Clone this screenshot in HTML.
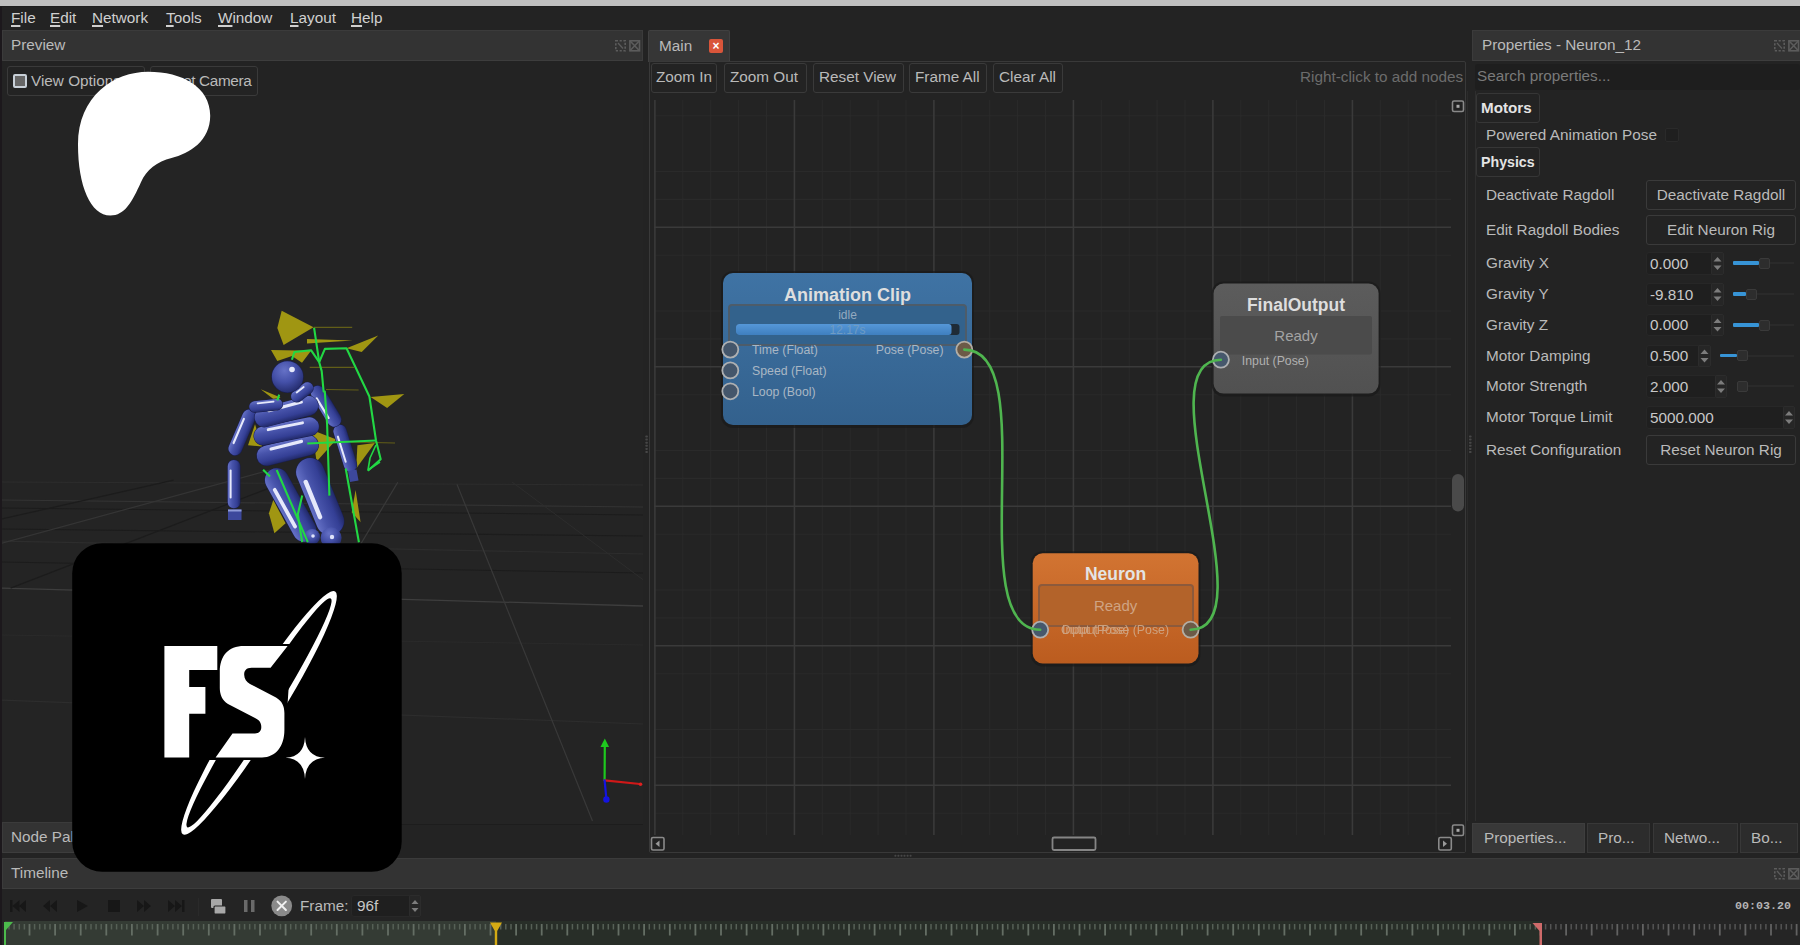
<!DOCTYPE html>
<html><head><meta charset="utf-8">
<style>
*{box-sizing:border-box;margin:0;padding:0}
html,body{width:1800px;height:945px;overflow:hidden;background:#232323;font-family:"Liberation Sans",sans-serif;color:#bababa}
.a{position:absolute}
.t{position:absolute;white-space:nowrap;font-size:15.3px;line-height:18px}
.hdr{position:absolute;background:#333333;border:1px solid #3b3b3b;border-bottom-color:#3d3d3d}
.btn{position:absolute;border:1px solid #3a3a3a;border-radius:3px;background:#232323}
.u{text-decoration:underline;text-underline-offset:2px;text-decoration-thickness:2px}
.ic{position:absolute;width:11px;height:11px;border:1px dashed #666}
</style></head><body>
<!-- top strip -->
<div class="a" style="left:0;top:0;width:1800px;height:6px;background:#bfbfbf"></div>
<div class="a" style="left:0;top:6px;width:1.5px;height:939px;background:#1c181c"></div><div class="a" style="left:0;top:6px;width:1800px;height:1px;background:#1e1e1e"></div>

<!-- menu bar -->
<div class="t" style="left:11px;top:8.5px;color:#d0d0d0"><span class="u">F</span>ile</div>
<div class="t" style="left:50px;top:8.5px;color:#d0d0d0"><span class="u">E</span>dit</div>
<div class="t" style="left:92px;top:8.5px;color:#d0d0d0"><span class="u">N</span>etwork</div>
<div class="t" style="left:166px;top:8.5px;color:#d0d0d0"><span class="u">T</span>ools</div>
<div class="t" style="left:218px;top:8.5px;color:#d0d0d0"><span class="u">W</span>indow</div>
<div class="t" style="left:290px;top:8.5px;color:#d0d0d0"><span class="u">L</span>ayout</div>
<div class="t" style="left:351px;top:8.5px;color:#d0d0d0"><span class="u">H</span>elp</div>

<!-- ===== LEFT PREVIEW DOCK ===== -->
<div class="hdr" style="left:2px;top:30px;width:641px;height:31px"></div>
<div class="t" style="left:11px;top:36px">Preview</div>
<svg class="a" style="left:614px;top:38.5px" width="30" height="14" viewBox="614 38.5 30 14"><g stroke="#5c5c5c" stroke-width="1.6" fill="none"><rect x="615.8" y="40.3" width="9.4" height="10" stroke-dasharray="2.2 1.6"/><path d="M618 42.5l5 5.5" stroke-width="1.3"/><rect x="629.9" y="40.3" width="9.6" height="10"/><path d="M629.9 40.3l9.6 10M639.5 40.3l-9.6 10"/></g></svg>

<div class="btn" style="left:7px;top:66px;width:138px;height:30px"></div>
<div class="a" style="left:13px;top:74px;width:14px;height:14px;border:2px solid #c8d0d8;background:#666;border-radius:2px"></div>
<div class="t" style="left:31px;top:72px">View Options</div>
<div class="btn" style="left:150px;top:66px;width:108px;height:30px"></div>
<div class="t" style="left:157px;top:72px;letter-spacing:-0.35px">Reset Camera</div>

<!--VIEWPORT--><svg class="a" style="left:2px;top:100px" width="641" height="724" viewBox="2 100 641 724"><defs><linearGradient id="capG" x1="0" y1="0" x2="0" y2="1"><stop offset="0" stop-color="#6571c6"/><stop offset="0.35" stop-color="#4854ab"/><stop offset="0.75" stop-color="#343f95"/><stop offset="1" stop-color="#222a6a"/></linearGradient><radialGradient id="headG" cx="0.4" cy="0.3" r="0.75"><stop offset="0" stop-color="#6571c6"/><stop offset="0.5" stop-color="#4450a8"/><stop offset="1" stop-color="#222a6a"/></radialGradient></defs><rect x="2" y="100" width="641" height="724" fill="#242424"/><line x1="0" y1="588" x2="643" y2="606" stroke="#3e3e3e" stroke-width="1.3"/><line x1="0" y1="541" x2="643" y2="554" stroke="#2d2d2d" stroke-width="1.2"/><line x1="0" y1="500" x2="643" y2="507" stroke="#333" stroke-width="1.2"/><line x1="0" y1="482" x2="643" y2="485" stroke="#2d2d2d" stroke-width="1"/><line x1="0" y1="529" x2="643" y2="536" stroke="#1c1c1c" stroke-width="1.2"/><line x1="0" y1="508" x2="643" y2="515" stroke="#1c1c1c" stroke-width="1"/><line x1="0" y1="562" x2="643" y2="573" stroke="#1c1c1c" stroke-width="1"/><line x1="0" y1="700" x2="643" y2="724" stroke="#2d2d2d" stroke-width="1.2"/><line x1="0" y1="635" x2="643" y2="645" stroke="#2a2a2a" stroke-width="1"/><line x1="0" y1="543.7" x2="270" y2="470" stroke="#353535" stroke-width="1.2"/><line x1="0" y1="519.4" x2="173.6" y2="480.2" stroke="#1c1c1c" stroke-width="1.3"/><line x1="10.6" y1="588.2" x2="290" y2="480" stroke="#1c1c1c" stroke-width="1.3"/><line x1="397.8" y1="482.3" x2="300" y2="645" stroke="#393939" stroke-width="1.2"/><line x1="457" y1="484.4" x2="592.5" y2="821" stroke="#393939" stroke-width="1.2"/><line x1="512" y1="482" x2="643" y2="579.7" stroke="#2d2d2d" stroke-width="1"/><path d="M281.7 310.8 L313.5 327.3 L283.6 345.1 L277.3 327.9Z" fill="#a09612" opacity="1"/><path d="M307.0 339.0 L352.8 340.6 L307.0 343.5Z" fill="#a09612" opacity="1"/><path d="M346.5 348.2 L378.2 335.5 L361.7 352.0Z" fill="#a09612" opacity="1"/><path d="M271.0 350.0 L311.0 350.8 L302.0 362.8 L292.0 356.0 L277.3 361.0Z" fill="#a09612" opacity="1"/><path d="M370.6 397.0 L404.3 394.0 L387.1 408.0Z" fill="#a09612" opacity="1"/><path d="M260.7 389.3 L280.5 397.5 L275.9 401.0Z" fill="#a09612" opacity="1"/><path d="M248.0 445.2 L255.0 424.2 L262.0 446.4Z" fill="#a09612" opacity="1"/><path d="M312.0 430.0 L336.4 439.4 L316.6 461.5Z" fill="#a09612" opacity="1"/><path d="M357.4 445.2 L374.9 442.9 L356.2 468.5Z" fill="#a09612" opacity="1"/><path d="M273.3 500.0 L285.6 523.3 L274.4 533.3 L268.9 513.3Z" fill="#a09612" opacity="1"/><path d="M355.6 490.0 L360.6 522.2 L351.7 512.2Z" fill="#a09612" opacity="1"/><line x1="313.5" y1="327.3" x2="352.2" y2="327.3" stroke="#625e18" stroke-width="1.2"/><line x1="309.7" y1="367.3" x2="354.1" y2="367.3" stroke="#625e18" stroke-width="1.2"/><line x1="326" y1="389.5" x2="358.6" y2="390" stroke="#625e18" stroke-width="1.2"/><line x1="350" y1="442" x2="395" y2="443" stroke="#625e18" stroke-width="1.2"/><g transform="translate(233.9 484.1) rotate(-90.0)"><rect x="-24.7" y="-6.6" width="49.4" height="13.2" rx="6.6" fill="#1a1f50"/><rect x="-24.2" y="-6.1" width="48.4" height="12.2" rx="6.1" fill="url(#capG)"/><rect x="-14.5" y="-4.3" width="29.0" height="2.0" rx="1.0" fill="#e6e9fb"/></g><g transform="translate(242.1 432.4) rotate(-66.8)"><rect x="-24.8" y="-7.1" width="49.7" height="14.2" rx="7.1" fill="#1a1f50"/><rect x="-24.3" y="-6.6" width="48.7" height="13.2" rx="6.6" fill="url(#capG)"/><rect x="-14.2" y="-4.7" width="28.4" height="2.1" rx="1.1" fill="#e6e9fb"/></g><g transform="translate(290.5 505.0) rotate(-119.0)"><rect x="-40.8" y="-12.2" width="81.6" height="24.4" rx="12.2" fill="#1a1f50"/><rect x="-40.3" y="-11.7" width="80.6" height="23.4" rx="11.7" fill="url(#capG)"/><rect x="-22.9" y="-8.3" width="45.7" height="3.7" rx="1.9" fill="#e6e9fb"/></g><g transform="translate(320.0 496.6) rotate(-112.2)"><rect x="-40.9" y="-14.4" width="81.8" height="28.8" rx="14.4" fill="#1a1f50"/><rect x="-40.4" y="-13.9" width="80.8" height="27.8" rx="13.9" fill="url(#capG)"/><rect x="-21.2" y="-9.9" width="42.4" height="4.4" rx="2.2" fill="#e6e9fb"/></g><g transform="translate(345.1 448.1) rotate(-107.3)"><rect x="-24.6" y="-6.9" width="49.2" height="13.8" rx="6.9" fill="#1a1f50"/><rect x="-24.1" y="-6.4" width="48.2" height="12.8" rx="6.4" fill="url(#capG)"/><rect x="-14.2" y="-4.5" width="28.3" height="2.0" rx="1.0" fill="#e6e9fb"/></g><g transform="translate(326.0 406.2) rotate(-121.3)"><rect x="-23.2" y="-7.5" width="46.4" height="15.0" rx="7.5" fill="#1a1f50"/><rect x="-22.7" y="-7.0" width="45.4" height="14.0" rx="7.0" fill="url(#capG)"/><rect x="-12.5" y="-5.0" width="25.1" height="2.2" rx="1.1" fill="#e6e9fb"/></g><g transform="translate(287.6 450.4) rotate(-14.1)"><rect x="-32.0" y="-10.4" width="64.0" height="20.8" rx="10.4" fill="#1a1f50"/><rect x="-31.5" y="-9.9" width="63.0" height="19.8" rx="9.9" fill="url(#capG)"/><rect x="-17.3" y="-7.0" width="34.6" height="3.2" rx="1.6" fill="#e6e9fb"/></g><g transform="translate(286.4 431.2) rotate(-11.3)"><rect x="-33.4" y="-9.7" width="66.8" height="19.4" rx="9.7" fill="#1a1f50"/><rect x="-32.9" y="-9.2" width="65.8" height="18.4" rx="9.2" fill="url(#capG)"/><rect x="-19.0" y="-6.5" width="37.9" height="2.9" rx="1.5" fill="#e6e9fb"/></g><g transform="translate(286.4 411.5) rotate(-14.8)"><rect x="-33.0" y="-10.1" width="66.0" height="20.2" rx="10.1" fill="#1a1f50"/><rect x="-32.5" y="-9.6" width="65.0" height="19.2" rx="9.6" fill="url(#capG)"/><rect x="-18.3" y="-6.8" width="36.7" height="3.1" rx="1.5" fill="#e6e9fb"/></g><g transform="translate(265.9 405.6) rotate(-5.9)"><rect x="-17.2" y="-6.1" width="34.4" height="12.2" rx="6.1" fill="#1a1f50"/><rect x="-16.7" y="-5.6" width="33.4" height="11.2" rx="5.6" fill="url(#capG)"/><rect x="-8.9" y="-4.0" width="17.8" height="1.8" rx="0.9" fill="#e6e9fb"/></g><g transform="translate(302.1 392.2) rotate(-37.6)"><rect x="-12.9" y="-6.3" width="25.9" height="12.6" rx="6.3" fill="#1a1f50"/><rect x="-12.4" y="-5.8" width="24.9" height="11.6" rx="5.8" fill="url(#capG)"/><rect x="-5.3" y="-4.1" width="10.6" height="1.9" rx="0.9" fill="#e6e9fb"/></g><circle cx="287.5" cy="376.8" r="16.2" fill="#1a1f50"/><circle cx="287.5" cy="376.8" r="15.6" fill="url(#headG)"/><circle cx="292" cy="369.5" r="2.8" fill="#e6e9fb"/><circle cx="312.2" cy="536.7" r="7.8" fill="url(#headG)"/><circle cx="313" cy="536" r="1.8" fill="#dfe3fa"/><circle cx="331.1" cy="537.8" r="10.5" fill="url(#headG)"/><circle cx="332" cy="537" r="2.2" fill="#dfe3fa"/><path d="M228 509.5h13.5v10.5h-13.5z" fill="#3d489c"/><path d="M228 509.5h13.5v2h-13.5z" fill="#8f9ad8"/><path d="M348 471l8.5 -1.5 2 11 -8.5 1.5z" fill="#3d489c"/><path d="M314.1 327.9 L319.2 362.2 L321.7 371.1 L323.6 391.4 L324.8 391.6 L327.1 424.2 L329.4 495.6" stroke="#22d844" stroke-width="2.1" fill="none" stroke-linejoin="round"/><path d="M291.9 359.7 L294.4 352.0 L311.0 350.2 L319.2 362.2" stroke="#22d844" stroke-width="2.1" fill="none" stroke-linejoin="round"/><path d="M319.2 362.2 L324.9 348.9 L346.5 348.2 L369.4 396.5 L376.0 440.5 L380.7 459.2 L367.9 470.8" stroke="#22d844" stroke-width="2.1" fill="none" stroke-linejoin="round"/><path d="M307.3 443.5 L376.0 440.5" stroke="#22d844" stroke-width="2.1" fill="none" stroke-linejoin="round"/><path d="M279.2 394.6 L277.3 400.3" stroke="#22d844" stroke-width="2.1" fill="none" stroke-linejoin="round"/><path d="M345.7 468.5 L358.9 542.2" stroke="#22d844" stroke-width="2.1" fill="none" stroke-linejoin="round"/><path d="M276.7 470.0 L307.8 542.2" stroke="#22d844" stroke-width="2.1" fill="none" stroke-linejoin="round"/><path d="M302.2 495.6 L297.8 514.4 L302.2 542.2" stroke="#22d844" stroke-width="2.1" fill="none" stroke-linejoin="round"/><path d="M263.1 469.7 L270.0 476.6" stroke="#22d844" stroke-width="2.1" fill="none" stroke-linejoin="round"/><path d="M376.0 445.0 L370.0 458.0 L368.0 470.0 L380.0 462.0" stroke="#22d844" stroke-width="1.6" fill="none" stroke-linejoin="round"/><g stroke-width="2.2" stroke-linecap="round"><line x1="604.6" y1="780.3" x2="604.8" y2="745" stroke="#1ec81e"/><line x1="604.6" y1="780.3" x2="640" y2="784" stroke="#d01818"/><line x1="604.6" y1="780.3" x2="606.3" y2="798" stroke="#1414e0"/></g><path d="M600.5 747l4.3-8.5 4.3 8.5z" fill="#1ec81e"/><circle cx="606.4" cy="799.5" r="3.2" fill="#1414e0"/><circle cx="640.5" cy="784.2" r="1.8" fill="#e02020"/></svg>
<!--/VIEWPORT--><div class="a" style="left:2px;top:823.5px;width:641px;height:1px;background:#1d1d1d"></div>

<div class="hdr" style="left:2px;top:822px;width:200px;height:31px"></div>
<div class="t" style="left:11px;top:828px">Node Palette</div>

<!-- ===== CENTER ===== -->
<div class="a" style="left:648px;top:30px;width:82px;height:32px;background:#363636;border:1px solid #404040;border-bottom:none;border-radius:2px 2px 0 0"></div>
<div class="t" style="left:659px;top:37px">Main</div>
<div class="a" style="left:709px;top:39px;width:14px;height:14px;background:#d9553a;border-radius:2px;color:#fff;font-size:12px;line-height:14px;text-align:center;font-weight:bold">&#215;</div>

<div class="a" style="left:649px;top:61px;width:817px;height:792px;border:1px solid #393939;border-radius:2px"></div>
<div class="btn" style="left:651px;top:63px;width:66px;height:30px"></div>
<div class="t" style="left:656px;top:68px">Zoom In</div>
<div class="btn" style="left:724px;top:63px;width:83px;height:30px"></div>
<div class="t" style="left:730px;top:68px">Zoom Out</div>
<div class="btn" style="left:813px;top:63px;width:91px;height:30px"></div>
<div class="t" style="left:819px;top:68px">Reset View</div>
<div class="btn" style="left:909px;top:63px;width:78px;height:30px"></div>
<div class="t" style="left:915px;top:68px">Frame All</div>
<div class="btn" style="left:993px;top:63px;width:70px;height:30px"></div>
<div class="t" style="left:999px;top:68px">Clear All</div>
<div class="t" style="left:1300px;top:68px;color:#6c6c6c">Right-click to add nodes</div>

<svg class="a" style="left:650px;top:96px" width="815" height="756" viewBox="650 96 815 756">
<rect x="650" y="96" width="815" height="756" fill="#232323"/>
<path d="M682.8 100V835M710.7 100V835M738.6 100V835M766.5 100V835M822.3 100V835M850.2 100V835M878.1 100V835M906.0 100V835M961.8 100V835M989.7 100V835M1017.6 100V835M1045.5 100V835M1101.3 100V835M1129.2 100V835M1157.1 100V835M1185.0 100V835M1240.8 100V835M1268.7 100V835M1296.6 100V835M1324.5 100V835M1380.3 100V835M1408.2 100V835M1436.1 100V835M654 115.7H1451M654 171.5H1451M654 199.4H1451M654 255.2H1451M654 311.0H1451M654 338.9H1451M654 394.7H1451M654 450.5H1451M654 478.4H1451M654 534.2H1451M654 590.0H1451M654 617.9H1451M654 673.7H1451M654 729.5H1451M654 757.4H1451M654 813.2H1451" stroke="#2a2a2a" stroke-width="1.1" fill="none"/>
<path d="M654.9 100V835M794.4 100V835M933.9 100V835M1073.4 100V835M1212.9 100V835M1352.4 100V835M654 227.3H1451M654 366.8H1451M654 506.3H1451M654 645.8H1451M654 785.3H1451" stroke="#3a3a3a" stroke-width="1.6" fill="none"/>

<defs>
<linearGradient id="gBlue" x1="0" y1="0" x2="0" y2="1"><stop offset="0" stop-color="#3f73a4"/><stop offset="1" stop-color="#33618d"/></linearGradient>
<linearGradient id="gGrey" x1="0" y1="0" x2="0" y2="1"><stop offset="0" stop-color="#5c5c5c"/><stop offset="1" stop-color="#515151"/></linearGradient>
<linearGradient id="gOrange" x1="0" y1="0" x2="0" y2="1"><stop offset="0" stop-color="#d27432"/><stop offset="1" stop-color="#bb5c1f"/></linearGradient>
<linearGradient id="gBar" x1="0" y1="0" x2="0" y2="1"><stop offset="0" stop-color="#5597d8"/><stop offset="1" stop-color="#3f7fbf"/></linearGradient>
</defs>
<!-- Animation Clip -->
<rect x="721" y="271" width="253" height="157" rx="12" fill="#1a1a1a" opacity="0.7"/><rect x="723" y="273" width="249" height="152" rx="10" fill="url(#gBlue)"/>
<rect x="729" y="305" width="237" height="40" rx="3" fill="#33628c" stroke="#4d5c6a" stroke-width="2"/>
<text x="847.5" y="300.5" text-anchor="middle" font-family="Liberation Sans" font-weight="bold" font-size="18" fill="#dedede">Animation Clip</text>
<text x="847.5" y="319" text-anchor="middle" font-family="Liberation Sans" font-size="12" fill="#94aac0">idle</text>
<rect x="736" y="324" width="223.5" height="11" rx="3" fill="#1f2b36"/>
<rect x="736" y="324" width="215.5" height="11" rx="3" fill="url(#gBar)"/>
<text x="847.5" y="334" text-anchor="middle" font-family="Liberation Sans" font-size="12" fill="#6f9cc4">12.17s</text>
<g font-family="Liberation Sans" font-size="12.3" fill="#a9b7c4">
<text x="752" y="353.8">Time (Float)</text>
<text x="752" y="374.6">Speed (Float)</text>
<text x="752" y="395.5">Loop (Bool)</text>
<text x="943.5" y="353.8" text-anchor="end">Pose (Pose)</text>
</g>
<g stroke="#aeb0b2" stroke-width="1.8" fill="#44566b">
<circle cx="730.3" cy="349.6" r="8"/><circle cx="730.3" cy="370.4" r="8"/><circle cx="730.3" cy="391.3" r="8"/>
</g>
<circle cx="964.3" cy="349.6" r="8" fill="#6c5a47" stroke="#b4aea4" stroke-width="1.8"/>

<!-- FinalOutput -->
<rect x="1211.6" y="281.6" width="169" height="115" rx="12" fill="#1a1a1a" opacity="0.7"/><rect x="1213.6" y="283.6" width="165" height="110" rx="10" fill="url(#gGrey)"/>
<rect x="1220" y="316" width="152" height="38.4" rx="2" fill="#4b4b4b"/>
<text x="1296" y="310.7" text-anchor="middle" font-family="Liberation Sans" font-weight="bold" font-size="17.5" fill="#dedede">FinalOutput</text>
<text x="1296" y="340.5" text-anchor="middle" font-family="Liberation Sans" font-size="15" fill="#a3a3a3">Ready</text>
<text x="1241.8" y="364.5" font-family="Liberation Sans" font-size="12.3" fill="#b0b0b0">Input (Pose)</text>
<circle cx="1220.9" cy="359.7" r="8" fill="#46586c" stroke="#aeb0b2" stroke-width="1.8"/>

<!-- Neuron -->
<rect x="1030.7" y="551.2" width="169.8" height="115.2" rx="12" fill="#1a1a1a" opacity="0.7"/><rect x="1032.7" y="553.2" width="165.8" height="110.2" rx="10" fill="url(#gOrange)"/>
<rect x="1039" y="585" width="154" height="41" rx="3" fill="#b3632a" stroke="#8c5a3c" stroke-width="2"/>
<text x="1115.6" y="580.4" text-anchor="middle" font-family="Liberation Sans" font-weight="bold" font-size="17.5" fill="#e4e4e4">Neuron</text>
<text x="1115.6" y="611" text-anchor="middle" font-family="Liberation Sans" font-size="15" fill="#cfa483">Ready</text>
<g font-family="Liberation Sans" font-size="12.3" fill="#cfa98a" opacity="0.9">
<text x="1062" y="634">Input (Pose)</text>
<text x="1169" y="634" text-anchor="end">Output Pose (Pose)</text>
</g>
<circle cx="1040.2" cy="629.7" r="8" fill="#46586c" stroke="#aeb0b2" stroke-width="1.8"/>
<circle cx="1190.6" cy="629.7" r="8" fill="#6c5a47" stroke="#b4aea4" stroke-width="1.8"/>

<!-- connections -->
<g fill="none" stroke="#4fb54f" stroke-width="2.6" stroke-linecap="round">
<path d="M964.3 349.6C1044 349.6 960 629.7 1040.2 629.7"/>
<path d="M1190.6 629.7C1270 629.7 1141 359.7 1220.9 359.7"/>
</g>

<!-- scrollbars -->
<rect x="1452" y="474" width="12" height="37.5" rx="6" fill="#4a4a4a"/>
<rect x="1452.5" y="101" width="11" height="10.5" rx="1.5" fill="#222" stroke="#8a8a8a" stroke-width="1.6"/>
<rect x="1456.5" y="104.8" width="3" height="3" fill="#aaa"/>
<rect x="1452.5" y="825" width="11" height="10.5" rx="1.5" fill="#222" stroke="#8a8a8a" stroke-width="1.6"/>
<rect x="1456.5" y="828.8" width="3" height="3" fill="#aaa"/>
<rect x="1438.8" y="837.5" width="12.5" height="12.5" rx="1.5" fill="#222" stroke="#8a8a8a" stroke-width="1.6"/>
<path d="M1443 840.5l4 3.3-4 3.3z" fill="#999"/>
<rect x="651.5" y="837.5" width="12.5" height="12.5" rx="1.5" fill="#222" stroke="#8a8a8a" stroke-width="1.6"/>
<path d="M659.5 840.5l-4 3.3 4 3.3z" fill="#999"/>
<rect x="1052.5" y="837.5" width="43" height="12.5" rx="1.5" fill="#232323" stroke="#858585" stroke-width="1.8"/>
</svg>

<!-- ===== RIGHT DOCK ===== -->
<div class="hdr" style="left:1472px;top:30px;width:330px;height:31px"></div>
<div class="t" style="left:1482px;top:36px">Properties - Neuron_12</div>
<svg class="a" style="left:1773px;top:38.5px" width="30" height="14" viewBox="1773 38.5 30 14"><g stroke="#5c5c5c" stroke-width="1.6" fill="none"><rect x="1774.8" y="40.3" width="9.4" height="10" stroke-dasharray="2.2 1.6"/><path d="M1777 42.5l5 5.5" stroke-width="1.3"/><rect x="1788.8999999999999" y="40.3" width="9.6" height="10"/><path d="M1788.8999999999999 40.3l9.6 10M1798.5 40.3l-9.6 10"/></g></svg>

<div class="a" style="left:1475px;top:64px;width:325px;height:26px;background:#1e1e1e;border-radius:3px"></div>
<div class="t" style="left:1477px;top:67px;color:#7a7a7a">Search properties...</div>


<!-- props content -->
<div class="a" style="left:1467px;top:91px;width:1px;height:730px;background:#2b2b2b"></div>
<div class="a" style="left:1475px;top:91px;width:1px;height:730px;background:#2e2e2e"></div>
<div class="btn" style="left:1476px;top:93px;width:64px;height:30px;border-color:#363636"></div>
<div class="t" style="left:1481px;top:99px;font-weight:bold;color:#e4e4e4;font-size:15.2px">Motors</div>
<div class="t" style="left:1486px;top:126px">Powered Animation Pose</div>
<div class="a" style="left:1665px;top:128px;width:14px;height:14px;background:#1f1f1f;border:1px solid #2a2a2a;border-radius:2px"></div>
<div class="btn" style="left:1476px;top:147px;width:64px;height:30px;border-color:#363636"></div>
<div class="t" style="left:1481px;top:153px;font-weight:bold;color:#e4e4e4;font-size:14.2px">Physics</div>

<div class="t" style="left:1486px;top:186px">Deactivate Ragdoll</div>
<div class="btn" style="left:1646px;top:180px;width:150px;height:30px"></div>
<div class="t" style="left:1646px;top:186px;width:150px;text-align:center">Deactivate Ragdoll</div>

<div class="t" style="left:1486px;top:221px">Edit Ragdoll Bodies</div>
<div class="btn" style="left:1646px;top:215px;width:150px;height:30px"></div>
<div class="t" style="left:1646px;top:221px;width:150px;text-align:center">Edit Neuron Rig</div>

<div class="t" style="left:1486px;top:254px">Gravity X</div>
<div class="t" style="left:1486px;top:285px">Gravity Y</div>
<div class="t" style="left:1486px;top:316px">Gravity Z</div>
<div class="t" style="left:1486px;top:347px">Motor Damping</div>
<div class="t" style="left:1486px;top:377px">Motor Strength</div>
<div class="t" style="left:1486px;top:408px">Motor Torque Limit</div>
<div class="t" style="left:1486px;top:441px">Reset Configuration</div>
<div class="btn" style="left:1646px;top:435px;width:150px;height:30px"></div>
<div class="t" style="left:1646px;top:441px;width:150px;text-align:center">Reset Neuron Rig</div>
<div class="a" style="left:1646px;top:252px;width:78px;height:23px;background:#1f1f1f;border:1px solid #272727;border-radius:3px"></div><div class="a" style="left:1711px;top:252px;width:13px;height:23px;background:#262626;border:1px solid #2c2c2c;border-radius:2px"></div><svg class="a" style="left:1711px;top:252px" width="13" height="23"><path d="M2.5 9.5l4 -4.5 4 4.5z M2.5 13.5l4 4.5 4 -4.5z" fill="#7c7c7c"/></svg><div class="t" style="left:1650px;top:254.5px;color:#c8c8c8">0.000</div><div class="a" style="left:1733px;top:262px;width:61px;height:2px;background:#2a2a2a"></div><div class="a" style="left:1733px;top:261px;width:26px;height:3.5px;background:#3794d6;border-radius:1px"></div><div class="a" style="left:1759px;top:257.5px;width:11px;height:11px;background:#2d2d2d;border:1px solid #3a3a3a;border-radius:2px"></div><div class="a" style="left:1646px;top:283px;width:78px;height:23px;background:#1f1f1f;border:1px solid #272727;border-radius:3px"></div><div class="a" style="left:1711px;top:283px;width:13px;height:23px;background:#262626;border:1px solid #2c2c2c;border-radius:2px"></div><svg class="a" style="left:1711px;top:283px" width="13" height="23"><path d="M2.5 9.5l4 -4.5 4 4.5z M2.5 13.5l4 4.5 4 -4.5z" fill="#7c7c7c"/></svg><div class="t" style="left:1650px;top:285.5px;color:#c8c8c8">-9.810</div><div class="a" style="left:1733px;top:293px;width:61px;height:2px;background:#2a2a2a"></div><div class="a" style="left:1733px;top:292px;width:13px;height:3.5px;background:#3794d6;border-radius:1px"></div><div class="a" style="left:1746px;top:288.5px;width:11px;height:11px;background:#2d2d2d;border:1px solid #3a3a3a;border-radius:2px"></div><div class="a" style="left:1646px;top:314px;width:78px;height:22px;background:#1f1f1f;border:1px solid #272727;border-radius:3px"></div><div class="a" style="left:1711px;top:314px;width:13px;height:22px;background:#262626;border:1px solid #2c2c2c;border-radius:2px"></div><svg class="a" style="left:1711px;top:314px" width="13" height="22"><path d="M2.5 9.0l4 -4.5 4 4.5z M2.5 13.0l4 4.5 4 -4.5z" fill="#7c7c7c"/></svg><div class="t" style="left:1650px;top:316.0px;color:#c8c8c8">0.000</div><div class="a" style="left:1733px;top:324px;width:61px;height:2px;background:#2a2a2a"></div><div class="a" style="left:1733px;top:323px;width:26px;height:3.5px;background:#3794d6;border-radius:1px"></div><div class="a" style="left:1759px;top:319.5px;width:11px;height:11px;background:#2d2d2d;border:1px solid #3a3a3a;border-radius:2px"></div><div class="a" style="left:1646px;top:345px;width:65px;height:22px;background:#1f1f1f;border:1px solid #272727;border-radius:3px"></div><div class="a" style="left:1698px;top:345px;width:13px;height:22px;background:#262626;border:1px solid #2c2c2c;border-radius:2px"></div><svg class="a" style="left:1698px;top:345px" width="13" height="22"><path d="M2.5 9.0l4 -4.5 4 4.5z M2.5 13.0l4 4.5 4 -4.5z" fill="#7c7c7c"/></svg><div class="t" style="left:1650px;top:347.0px;color:#c8c8c8">0.500</div><div class="a" style="left:1720px;top:354.5px;width:74px;height:2px;background:#2a2a2a"></div><div class="a" style="left:1720px;top:353.5px;width:17px;height:3.5px;background:#3794d6;border-radius:1px"></div><div class="a" style="left:1737px;top:350.0px;width:11px;height:11px;background:#2d2d2d;border:1px solid #3a3a3a;border-radius:2px"></div><div class="a" style="left:1646px;top:375px;width:81px;height:23px;background:#1f1f1f;border:1px solid #272727;border-radius:3px"></div><div class="a" style="left:1715px;top:375px;width:12px;height:23px;background:#262626;border:1px solid #2c2c2c;border-radius:2px"></div><svg class="a" style="left:1715px;top:375px" width="12" height="23"><path d="M2.0 9.5l4 -4.5 4 4.5z M2.0 13.5l4 4.5 4 -4.5z" fill="#7c7c7c"/></svg><div class="t" style="left:1650px;top:377.5px;color:#c8c8c8">2.000</div><div class="a" style="left:1737px;top:385px;width:57px;height:2px;background:#2a2a2a"></div><div class="a" style="left:1737px;top:380.5px;width:11px;height:11px;background:#2d2d2d;border:1px solid #3a3a3a;border-radius:2px"></div><div class="a" style="left:1646px;top:406px;width:149px;height:23px;background:#1f1f1f;border:1px solid #272727;border-radius:3px"></div><div class="a" style="left:1783px;top:406px;width:12px;height:23px;background:#262626;border:1px solid #2c2c2c;border-radius:2px"></div><svg class="a" style="left:1783px;top:406px" width="12" height="23"><path d="M2.0 9.5l4 -4.5 4 4.5z M2.0 13.5l4 4.5 4 -4.5z" fill="#7c7c7c"/></svg><div class="t" style="left:1650px;top:408.5px;color:#c8c8c8">5000.000</div>

<!-- bottom tabs -->
<div class="a" style="left:1472px;top:823px;width:113px;height:30px;background:#383838;border:1px solid #3e3e3e"></div>
<div class="t" style="left:1484px;top:829px">Properties...</div>
<div class="a" style="left:1587px;top:823px;width:63px;height:30px;background:#2c2c2c;border:1px solid #383838"></div>
<div class="t" style="left:1598px;top:829px">Pro...</div>
<div class="a" style="left:1653px;top:823px;width:85px;height:30px;background:#2c2c2c;border:1px solid #383838"></div>
<div class="t" style="left:1664px;top:829px">Netwo...</div>
<div class="a" style="left:1740px;top:823px;width:58px;height:30px;background:#2c2c2c;border:1px solid #383838"></div>
<div class="t" style="left:1751px;top:829px">Bo...</div>

<!-- ===== TIMELINE ===== -->
<div class="hdr" style="left:2px;top:858px;width:1800px;height:31px"></div>
<div class="t" style="left:11px;top:864px">Timeline</div>
<svg class="a" style="left:1773px;top:867px" width="30" height="14" viewBox="1773 867 30 14"><g stroke="#5c5c5c" stroke-width="1.6" fill="none"><rect x="1774.8" y="868.8" width="9.4" height="10" stroke-dasharray="2.2 1.6"/><path d="M1777 871l5 5.5" stroke-width="1.3"/><rect x="1788.8999999999999" y="868.8" width="9.6" height="10"/><path d="M1788.8999999999999 868.8l9.6 10M1798.5 868.8l-9.6 10"/></g></svg>
<div class="a" style="left:2px;top:889px;width:1798px;height:33px;background:#242424"></div>
<div class="a" style="left:2px;top:921px;width:1798px;height:24px;background:#252525"></div>
<div class="a" style="left:5px;top:921px;width:491px;height:24px;background:#343b34"></div>
<div class="a" style="left:496px;top:921px;width:1045px;height:24px;background:#282e28"></div>
<svg class="a" style="left:0;top:889px" width="1800" height="56" viewBox="0 889 1800 56"><path d="M9.0 924V929.5M14.1 924V929.5M19.3 924V929.5M24.4 924V929.5M34.6 924V929.5M39.7 924V929.5M44.9 924V929.5M50.0 924V929.5M60.2 924V929.5M65.4 924V929.5M70.5 924V929.5M75.6 924V929.5M85.8 924V929.5M91.0 924V929.5M96.1 924V929.5M101.2 924V929.5M111.5 924V929.5M116.6 924V929.5M121.7 924V929.5M126.8 924V929.5M137.1 924V929.5M142.2 924V929.5M147.3 924V929.5M152.4 924V929.5M162.7 924V929.5M167.8 924V929.5M172.9 924V929.5M178.0 924V929.5M188.3 924V929.5M193.4 924V929.5M198.5 924V929.5M203.6 924V929.5M213.9 924V929.5M219.0 924V929.5M224.1 924V929.5M229.3 924V929.5M239.5 924V929.5M244.6 924V929.5M249.7 924V929.5M254.9 924V929.5M265.1 924V929.5M270.2 924V929.5M275.4 924V929.5M280.5 924V929.5M290.7 924V929.5M295.8 924V929.5M301.0 924V929.5M306.1 924V929.5M316.3 924V929.5M321.5 924V929.5M326.6 924V929.5M331.7 924V929.5M341.9 924V929.5M347.1 924V929.5M352.2 924V929.5M357.3 924V929.5M367.6 924V929.5M372.7 924V929.5M377.8 924V929.5M382.9 924V929.5M393.2 924V929.5M398.3 924V929.5M403.4 924V929.5M408.5 924V929.5M418.8 924V929.5M423.9 924V929.5M429.0 924V929.5M434.1 924V929.5M444.4 924V929.5M449.5 924V929.5M454.6 924V929.5M459.7 924V929.5M470.0 924V929.5M475.1 924V929.5M480.2 924V929.5M485.4 924V929.5M495.6 924V929.5M500.7 924V929.5M505.8 924V929.5M511.0 924V929.5M521.2 924V929.5M526.3 924V929.5M531.5 924V929.5M536.6 924V929.5M546.8 924V929.5M551.9 924V929.5M557.1 924V929.5M562.2 924V929.5M572.4 924V929.5M577.6 924V929.5M582.7 924V929.5M587.8 924V929.5M598.0 924V929.5M603.2 924V929.5M608.3 924V929.5M613.4 924V929.5M623.7 924V929.5M628.8 924V929.5M633.9 924V929.5M639.0 924V929.5M649.3 924V929.5M654.4 924V929.5M659.5 924V929.5M664.6 924V929.5M674.9 924V929.5M680.0 924V929.5M685.1 924V929.5M690.2 924V929.5M700.5 924V929.5M705.6 924V929.5M710.7 924V929.5M715.8 924V929.5M726.1 924V929.5M731.2 924V929.5M736.3 924V929.5M741.5 924V929.5M751.7 924V929.5M756.8 924V929.5M761.9 924V929.5M767.1 924V929.5M777.3 924V929.5M782.4 924V929.5M787.6 924V929.5M792.7 924V929.5M802.9 924V929.5M808.0 924V929.5M813.2 924V929.5M818.3 924V929.5M828.5 924V929.5M833.7 924V929.5M838.8 924V929.5M843.9 924V929.5M854.1 924V929.5M859.3 924V929.5M864.4 924V929.5M869.5 924V929.5M879.8 924V929.5M884.9 924V929.5M890.0 924V929.5M895.1 924V929.5M905.4 924V929.5M910.5 924V929.5M915.6 924V929.5M920.7 924V929.5M931.0 924V929.5M936.1 924V929.5M941.2 924V929.5M946.3 924V929.5M956.6 924V929.5M961.7 924V929.5M966.8 924V929.5M971.9 924V929.5M982.2 924V929.5M987.3 924V929.5M992.4 924V929.5M997.6 924V929.5M1007.8 924V929.5M1012.9 924V929.5M1018.0 924V929.5M1023.2 924V929.5M1033.4 924V929.5M1038.5 924V929.5M1043.7 924V929.5M1048.8 924V929.5M1059.0 924V929.5M1064.1 924V929.5M1069.3 924V929.5M1074.4 924V929.5M1084.6 924V929.5M1089.8 924V929.5M1094.9 924V929.5M1100.0 924V929.5M1110.2 924V929.5M1115.4 924V929.5M1120.5 924V929.5M1125.6 924V929.5M1135.9 924V929.5M1141.0 924V929.5M1146.1 924V929.5M1151.2 924V929.5M1161.5 924V929.5M1166.6 924V929.5M1171.7 924V929.5M1176.8 924V929.5M1187.1 924V929.5M1192.2 924V929.5M1197.3 924V929.5M1202.4 924V929.5M1212.7 924V929.5M1217.8 924V929.5M1222.9 924V929.5M1228.0 924V929.5M1238.3 924V929.5M1243.4 924V929.5M1248.5 924V929.5M1253.7 924V929.5M1263.9 924V929.5M1269.0 924V929.5M1274.1 924V929.5M1279.3 924V929.5M1289.5 924V929.5M1294.6 924V929.5M1299.8 924V929.5M1304.9 924V929.5M1315.1 924V929.5M1320.2 924V929.5M1325.4 924V929.5M1330.5 924V929.5M1340.7 924V929.5M1345.9 924V929.5M1351.0 924V929.5M1356.1 924V929.5M1366.3 924V929.5M1371.5 924V929.5M1376.6 924V929.5M1381.7 924V929.5M1392.0 924V929.5M1397.1 924V929.5M1402.2 924V929.5M1407.3 924V929.5M1417.6 924V929.5M1422.7 924V929.5M1427.8 924V929.5M1432.9 924V929.5M1443.2 924V929.5M1448.3 924V929.5M1453.4 924V929.5M1458.5 924V929.5M1468.8 924V929.5M1473.9 924V929.5M1479.0 924V929.5M1484.1 924V929.5M1494.4 924V929.5M1499.5 924V929.5M1504.6 924V929.5M1509.8 924V929.5M1520.0 924V929.5M1525.1 924V929.5M1530.2 924V929.5M1535.4 924V929.5" stroke="#566056" stroke-width="1.5" fill="none"/><path d="M29.5 924V935.5M55.1 924V935.5M80.7 924V935.5M106.3 924V935.5M131.9 924V935.5M157.6 924V935.5M183.2 924V935.5M208.8 924V935.5M234.4 924V935.5M260.0 924V935.5M285.6 924V935.5M311.2 924V935.5M336.8 924V935.5M362.4 924V935.5M388.0 924V935.5M413.6 924V935.5M439.3 924V935.5M464.9 924V935.5M490.5 924V935.5M516.1 924V935.5M541.7 924V935.5M567.3 924V935.5M592.9 924V935.5M618.5 924V935.5M644.1 924V935.5M669.8 924V935.5M695.4 924V935.5M721.0 924V935.5M746.6 924V935.5M772.2 924V935.5M797.8 924V935.5M823.4 924V935.5M849.0 924V935.5M874.6 924V935.5M900.2 924V935.5M925.9 924V935.5M951.5 924V935.5M977.1 924V935.5M1002.7 924V935.5M1028.3 924V935.5M1053.9 924V935.5M1079.5 924V935.5M1105.1 924V935.5M1130.7 924V935.5M1156.3 924V935.5M1182.0 924V935.5M1207.6 924V935.5M1233.2 924V935.5M1258.8 924V935.5M1284.4 924V935.5M1310.0 924V935.5M1335.6 924V935.5M1361.2 924V935.5M1386.8 924V935.5M1412.4 924V935.5M1438.0 924V935.5M1463.7 924V935.5M1489.3 924V935.5M1514.9 924V935.5M1540.5 924V935.5" stroke="#646e64" stroke-width="1.8" fill="none"/><path d="M1545.6 924V929.5M1550.7 924V929.5M1555.9 924V929.5M1561.0 924V929.5M1571.2 924V929.5M1576.3 924V929.5M1581.5 924V929.5M1586.6 924V929.5M1596.8 924V929.5M1602.0 924V929.5M1607.1 924V929.5M1612.2 924V929.5M1622.4 924V929.5M1627.6 924V929.5M1632.7 924V929.5M1637.8 924V929.5M1648.1 924V929.5M1653.2 924V929.5M1658.3 924V929.5M1663.4 924V929.5M1673.7 924V929.5M1678.8 924V929.5M1683.9 924V929.5M1689.0 924V929.5M1699.3 924V929.5M1704.4 924V929.5M1709.5 924V929.5M1714.6 924V929.5M1724.9 924V929.5M1730.0 924V929.5M1735.1 924V929.5M1740.2 924V929.5M1750.5 924V929.5M1755.6 924V929.5M1760.7 924V929.5M1765.9 924V929.5M1776.1 924V929.5M1781.2 924V929.5M1786.3 924V929.5M1791.5 924V929.5" stroke="#545454" stroke-width="1.5" fill="none"/><path d="M1566.1 924V935.5M1591.7 924V935.5M1617.3 924V935.5M1642.9 924V935.5M1668.5 924V935.5M1694.2 924V935.5M1719.8 924V935.5M1745.4 924V935.5M1771.0 924V935.5M1796.6 924V935.5" stroke="#626262" stroke-width="1.8" fill="none"/><path d="M4 922H13L6 930V945H4Z" fill="#4cba4c"/><path d="M490 922.5H502L497.2 931V945H494.8V931Z" fill="#d4aa14"/><path d="M1532.5 923H1542V945H1539.5V931Z" fill="#cf6a6a"/><g fill="#171717"><path d="M10 900h2.5v12H10z M12.5 906l7-6v12z M19 906l7-6v12z"/><path d="M43 906l7-6v12z M50 906l7-6v12z"/><path d="M77 900l11 6-11 6z"/><path d="M108 900h12v12h-12z"/><path d="M137 900l7 6-7 6z M144 900l7 6-7 6z"/><path d="M168 900l7 6-7 6z M175 900l7 6-7 6z M182 900h2.5v12H182z"/></g><path d="M198.5 898V916" stroke="#2a2a2a" stroke-width="1"/><g fill="#a8a8a8"><rect x="211" y="899" width="11" height="9" rx="1"/><rect x="214" y="906" width="12" height="8" rx="1" stroke="#242424" stroke-width="1.2"/></g><g fill="#6a6a6a"><rect x="244" y="900" width="3.5" height="12"/><rect x="251" y="900" width="3.5" height="12"/></g><circle cx="281.7" cy="905.8" r="10.4" fill="#8a8a8a"/><path d="M277.5 901.6l8.4 8.4M285.9 901.6l-8.4 8.4" stroke="#f0f0f0" stroke-width="2" stroke-linecap="round"/><path d="M411.5 904l3.5-4 3.5 4z M411.5 908l3.5 4 3.5-4z" fill="#7c7c7c"/></svg>
<div class="t" style="left:300px;top:897px">Frame:</div>
<div class="a" style="left:351px;top:895px;width:70px;height:22px;background:#1f1f1f;border:1px solid #282828;border-radius:3px"></div>
<div class="a" style="left:409px;top:895px;width:12px;height:22px;background:#262626;border:1px solid #2c2c2c;border-radius:2px"></div>
<svg class="a" style="left:409px;top:895px" width="12" height="22"><path d="M2.5 9l3.5-4 3.5 4z M2.5 13l3.5 4 3.5-4z" fill="#7c7c7c"/></svg>
<div class="t" style="left:357px;top:897px;color:#c8c8c8">96f</div>
<div class="t" style="left:1735px;top:897px;font-family:'Liberation Mono',monospace;font-size:11.7px;font-weight:bold;color:#b4b4b4">00:03.20</div>

<!--DOTS--><svg class="a" style="left:0;top:0" width="1800" height="945" viewBox="0 0 1800 945"><g fill="#474747"><rect x="645.3" y="435.5" width="2.6" height="2" rx="0.8"/><rect x="1469" y="435.5" width="2.6" height="2" rx="0.8"/><rect x="894.4" y="854.7" width="2" height="2" rx="0.8"/><rect x="645.3" y="438.6" width="2.6" height="2" rx="0.8"/><rect x="1469" y="438.6" width="2.6" height="2" rx="0.8"/><rect x="897.4" y="854.7" width="2" height="2" rx="0.8"/><rect x="645.3" y="441.7" width="2.6" height="2" rx="0.8"/><rect x="1469" y="441.7" width="2.6" height="2" rx="0.8"/><rect x="900.5" y="854.7" width="2" height="2" rx="0.8"/><rect x="645.3" y="444.8" width="2.6" height="2" rx="0.8"/><rect x="1469" y="444.8" width="2.6" height="2" rx="0.8"/><rect x="903.5" y="854.7" width="2" height="2" rx="0.8"/><rect x="645.3" y="447.9" width="2.6" height="2" rx="0.8"/><rect x="1469" y="447.9" width="2.6" height="2" rx="0.8"/><rect x="906.6" y="854.7" width="2" height="2" rx="0.8"/><rect x="645.3" y="451.0" width="2.6" height="2" rx="0.8"/><rect x="1469" y="451.0" width="2.6" height="2" rx="0.8"/><rect x="909.6" y="854.7" width="2" height="2" rx="0.8"/></g></svg><!--/DOTS-->
<!--LOGOS-->
<svg class="a" style="left:0;top:0" width="1800" height="945" viewBox="0 0 1800 945">
<defs>
<mask id="ringMask" maskUnits="userSpaceOnUse" x="60" y="530" width="360" height="360">
<rect x="60" y="530" width="360" height="360" fill="#fff"/>
<path d="M200 644H291.5L287.5 705V760H200Z" fill="#000"/>
</mask>
</defs>
<g transform="translate(60 60) scale(0.17989)">
<path d="M490 65C680 65 835 150 835 310C835 450 720 520 620 545C540 565 480 610 450 680C400 790 360 865 280 865C170 865 100 700 100 470C100 200 300 65 490 65Z" fill="#ffffff"/>
</g>
<rect x="72.2" y="543.3" width="329.5" height="328.4" rx="30" fill="#000"/>
<g mask="url(#ringMask)"><g transform="rotate(-57.9 259 712.85)">
<path fill-rule="evenodd" fill="#fff" d="M115.7 712.85a143.3 19 0 1 0 286.6 0a143.3 19 0 1 0 -286.6 0Z M124 712.85a135 13 0 1 0 270 0a135 13 0 1 0 -270 0Z"/>
</g></g>
<path d="M287.6 646L270.6 667.8L251.6 667.8C246 667.8 244 671 244.2 675C244.3 679 246.5 682 250 684L276 697.5C282 701 284.4 706 284.4 713L284.4 730C284.4 746 276 757.4 262 757.4L215.6 757.4L232.5 733.4L255 733.4C259 733.4 261.3 731 261.3 727C261.3 722.5 259 720 255.5 718.3L228 704C222 700.5 219.8 694 219.8 688L219.8 672C219.8 656 228 646 244 646Z" fill="#fff" stroke="#000" stroke-width="3" paint-order="stroke"/>
<path d="M164.4 646H217.3V670H189.2V686.9H205.4V713.8H189.2V757.4H164.4Z" fill="#fff"/>
<path d="M305 737Q305.9 756.9 325 757.8Q305.9 758.7 305 779Q304.1 758.7 285.5 757.8Q304.1 756.9 305 737Z" fill="#fff"/>
</svg>
<!--/LOGOS-->
</body></html>
